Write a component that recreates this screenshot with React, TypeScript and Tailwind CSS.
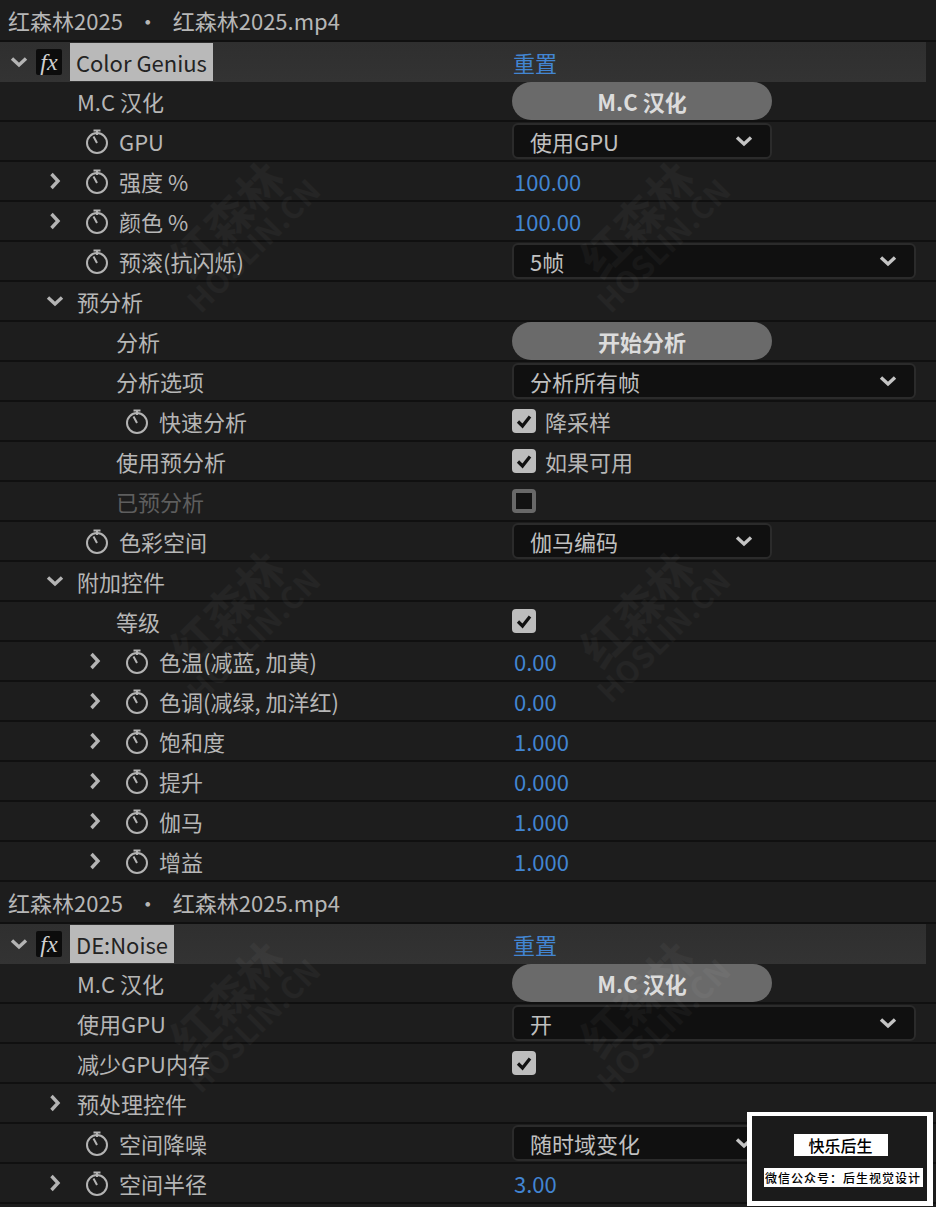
const FONT = "font-['Noto_Sans_CJK_SC','Noto_Sans',sans-serif]"

type Control =
  | { kind: 'value'; text: string }
  | { kind: 'reset' }
  | { kind: 'pill'; text: string }
  | { kind: 'select'; text: string; wide?: boolean }
  | { kind: 'check'; text?: string; off?: boolean }

type RowData = {
  label: string
  depth?: 0 | 1
  arrow?: 'right' | 'down'
  watch?: boolean
  dim?: boolean
  control?: Control
}

const firstGroup: RowData[] = [
  { label: 'M.C 汉化', control: { kind: 'pill', text: 'M.C 汉化' } },
  { label: 'GPU', watch: true, control: { kind: 'select', text: '使用GPU' } },
  { label: '强度 %', arrow: 'right', watch: true, control: { kind: 'value', text: '100.00' } },
  { label: '颜色 %', arrow: 'right', watch: true, control: { kind: 'value', text: '100.00' } },
  { label: '预滚(抗闪烁)', watch: true, control: { kind: 'select', text: '5帧', wide: true } },
  { label: '预分析', arrow: 'down' },
  { label: '分析', depth: 1, control: { kind: 'pill', text: '开始分析' } },
  { label: '分析选项', depth: 1, control: { kind: 'select', text: '分析所有帧', wide: true } },
  { label: '快速分析', depth: 1, watch: true, control: { kind: 'check', text: '降采样' } },
  { label: '使用预分析', depth: 1, control: { kind: 'check', text: '如果可用' } },
  { label: '已预分析', depth: 1, dim: true, control: { kind: 'check', off: true } },
  { label: '色彩空间', watch: true, control: { kind: 'select', text: '伽马编码' } },
  { label: '附加控件', arrow: 'down' },
  { label: '等级', depth: 1, control: { kind: 'check' } },
  { label: '色温(减蓝, 加黄)', depth: 1, arrow: 'right', watch: true, control: { kind: 'value', text: '0.00' } },
  { label: '色调(减绿, 加洋红)', depth: 1, arrow: 'right', watch: true, control: { kind: 'value', text: '0.00' } },
  { label: '饱和度', depth: 1, arrow: 'right', watch: true, control: { kind: 'value', text: '1.000' } },
  { label: '提升', depth: 1, arrow: 'right', watch: true, control: { kind: 'value', text: '0.000' } },
  { label: '伽马', depth: 1, arrow: 'right', watch: true, control: { kind: 'value', text: '1.000' } },
  { label: '增益', depth: 1, arrow: 'right', watch: true, control: { kind: 'value', text: '1.000' } },
]

const secondGroup: RowData[] = [
  { label: 'M.C 汉化', control: { kind: 'pill', text: 'M.C 汉化' } },
  { label: '使用GPU', control: { kind: 'select', text: '开', wide: true } },
  { label: '减少GPU内存', control: { kind: 'check' } },
  { label: '预处理控件', arrow: 'right' },
  { label: '空间降噪', watch: true, control: { kind: 'select', text: '随时域变化' } },
  { label: '空间半径', arrow: 'right', watch: true, control: { kind: 'value', text: '3.00' } },
]

function Chevron({ dir, className = '' }: { dir: 'right' | 'down'; className?: string }) {
  return (
    <svg viewBox="0 0 20 20" className={`h-5 w-5 ${className}`} fill="none" stroke="currentColor" strokeWidth="3.4">
      <path d={dir === 'down' ? 'M3 6.5l7 6.5 7-6.5' : 'M6.5 3l6.5 7-6.5 7'} />
    </svg>
  )
}

function Stopwatch() {
  return (
    <svg viewBox="0 0 24 26" className="h-[26px] w-6 shrink-0" fill="none" stroke="#b4b4b4" strokeWidth="2">
      <circle cx="12" cy="15" r="10" />
      <path d="M8.5 2.5h7M12 2.5v4.5M12 15l-3.5-6.5" />
    </svg>
  )
}

function Check({ off }: { off?: boolean }) {
  if (off) {
    return <span className="h-6 w-6 shrink-0 rounded-[4px] border-[4px] border-[#686868] bg-[#121212]" />
  }
  return (
    <span className="flex h-6 w-6 shrink-0 items-center justify-center rounded-[4px] bg-[#bdbdbd]">
      <svg viewBox="0 0 24 24" className="h-6 w-6" fill="none" stroke="#111" strokeWidth="3.2">
        <path d="M6 12.5l4.5 4.5L18 7.5" />
      </svg>
    </span>
  )
}

function ControlCell({ control }: { control?: Control }) {
  if (!control) return null
  switch (control.kind) {
    case 'value':
      return <span className="pl-[2px] text-[#4285d2]">{control.text}</span>
    case 'reset':
      return <span className="pl-[1px] text-[#4285d2]">重置</span>
    case 'pill':
      return (
        <div className="flex h-[38px] w-[260px] items-center justify-center rounded-full bg-[#6a6a6a] font-bold text-[#dcdcdc]">
          {control.text}
        </div>
      )
    case 'select':
      return (
        <div
          className={`flex h-9 items-center justify-between rounded-[6px] border-2 border-[#2b2b2b] bg-[#101010] pl-4 pr-[16px] text-[#c0c0c0] ${
            control.wide ? 'w-[404px]' : 'w-[260px]'
          }`}
        >
          <span>{control.text}</span>
          <Chevron dir="down" className="text-[#c4c4c4]" />
        </div>
      )
    case 'check':
      return (
        <div className="flex items-center gap-[9px]">
          <Check off={control.off} />
          {control.text ? <span>{control.text}</span> : null}
        </div>
      )
  }
}

function Row({ label, depth = 0, arrow, watch, dim, control }: RowData) {
  return (
    <div className="flex h-10 items-center border-b-2 border-[#101010]">
      <div className="flex w-[512px] shrink-0 items-center">
        <div className={depth === 1 ? 'w-[85px] shrink-0' : 'w-[45px] shrink-0'} />
        <div className="flex w-5 shrink-0 justify-center text-[#b4b4b4]">{arrow ? <Chevron dir={arrow} /> : null}</div>
        {watch ? (
          <div className="ml-5 mr-[10px] flex items-center">
            <Stopwatch />
          </div>
        ) : (
          <div className={depth === 1 ? 'w-[11px] shrink-0' : 'w-3 shrink-0'} />
        )}
        <span className={dim ? 'text-[#5e5e5e]' : ''}>{label}</span>
      </div>
      <ControlCell control={control} />
    </div>
  )
}

function SourceHeader() {
  return (
    <div className="flex h-[42px] items-center whitespace-pre border-b-2 border-[#101010] pl-2">
      红森林2025 <span className="mx-[9px]">·</span> 红森林2025.mp4
    </div>
  )
}

function EffectHeader({ name }: { name: string }) {
  return (
    <div className="flex h-10 w-[926px] items-center bg-gradient-to-b from-[#2f2f2f] to-[#333333]">
      <div className="flex w-[512px] shrink-0 items-center">
        <div className="flex w-[36px] shrink-0 justify-center pl-[2px] text-[#b4b4b4]">
          <Chevron dir="down" />
        </div>
        <div className="flex h-[26px] w-[26px] shrink-0 items-center justify-center rounded-[2px] bg-[#0c0c0c] font-['Liberation_Serif',serif] text-[24px] italic leading-none text-[#d0d0d0]">
          fx
        </div>
        <div className="ml-[8px] flex h-[38px] items-center bg-[#b9b9b9] px-[6px] text-[#232323]">{name}</div>
      </div>
      <ControlCell control={{ kind: 'reset' }} />
    </div>
  )
}

function Watermark({ className }: { className: string }) {
  return (
    <div className={`pointer-events-none absolute -rotate-45 select-none text-center font-bold leading-none text-white/[0.035] ${className}`}>
      <div className="text-[46px]">红森林</div>
      <div className="text-[30px] tracking-wide">HOSLIN.CN</div>
    </div>
  )
}

export default function App() {
  return (
    <div className={`relative h-[1207px] w-[936px] overflow-hidden bg-[#1d1d1d] text-[22px] leading-none text-[#b6b6b6] ${FONT}`}>
      <SourceHeader />
      <EffectHeader name="Color Genius" />
      {firstGroup.map((row) => (
        <Row key={row.label} {...row} />
      ))}
      <SourceHeader />
      <EffectHeader name="DE:Noise" />
      {secondGroup.map((row) => (
        <Row key={row.label} {...row} />
      ))}

      <Watermark className="left-[150px] top-[190px]" />
      <Watermark className="left-[560px] top-[190px]" />
      <Watermark className="left-[150px] top-[580px]" />
      <Watermark className="left-[560px] top-[580px]" />
      <Watermark className="left-[150px] top-[970px]" />
      <Watermark className="left-[560px] top-[970px]" />

      <div className="absolute left-[747px] top-[1112px] flex h-[94px] w-[186px] flex-col items-center border-b-[5px] border-l-[5px] border-r-[6px] border-t-[4px] border-white bg-[#1b1b1b] pt-[18px] font-['Noto_Sans_CJK_SC',sans-serif] text-black">
        <div className="ml-[2px] flex h-[22px] w-[94px] items-center justify-center bg-white text-[16px] font-medium">快乐后生</div>
        <div className="ml-[7px] mt-3 flex h-[19px] w-[159px] items-center justify-center bg-white text-[12px] font-medium tracking-[1px]">微信公众号：后生视觉设计</div>
      </div>
    </div>
  )
}
